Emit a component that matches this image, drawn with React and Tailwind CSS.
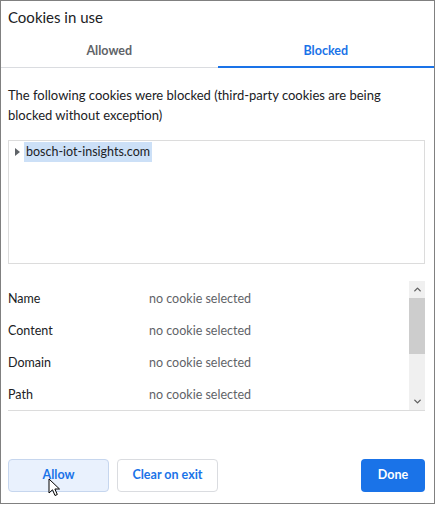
import { ChevronUp, ChevronDown } from "lucide-react";

const rows = ["Name", "Content", "Domain", "Path"];

function Cursor() {
  return (
    <svg className="absolute left-[40px] top-[19px]" width="13" height="19" viewBox="0 0 13 19">
      <path d="M1 1 L1 15 L4.5 11.8 L7 17.5 L9.3 16.5 L6.9 11 L11.5 11 Z" fill="#fff" stroke="#000" strokeWidth="1" strokeLinejoin="miter" />
    </svg>
  );
}

export default function App() {
  return (
    <div
      className="w-[435px] h-[504px] bg-white border border-[#808080] flex flex-col text-[#202124]"
      style={{ fontFamily: '"Segoe UI", Lato, "Noto Sans", sans-serif' }}
    >
      <div className="h-[35px] pl-[7px] pt-[5px] text-[15px] leading-[22px]">Cookies in use</div>

      <div className="flex h-[32px] text-[12.5px] font-bold">
        <div className="flex-1 flex items-center justify-center text-[#5f6368] border-b border-[#dadce0] pb-[1px]">
          Allowed
        </div>
        <div className="flex-1 flex items-center justify-center text-[#1a73e8] border-b-2 border-[#1a73e8]">
          Blocked
        </div>
      </div>

      <div className="pl-[7px] pr-[9px] pt-[17px] text-[13px] leading-[20px]">
        The following cookies were blocked (third-party cookies are being blocked without exception)
      </div>

      <div className="ml-[7px] mr-[9px] mt-[15px] h-[124px] border border-[#dcdcdc] pt-[1px] pl-[6px]">
        <div className="flex items-center h-[20px] text-[12.5px]">
          <svg width="5" height="8" viewBox="0 0 5 8" className="mr-[4px]">
            <path d="M0 0 L5 4 L0 8 Z" fill="#5f6368" />
          </svg>
          <span className="bg-[#cce0f7] px-[2px] leading-[20px]">bosch-iot-insights.com</span>
        </div>
      </div>

      <div className="ml-[7px] mr-[9px] mt-[17px] h-[130px] border-b border-[#dcdcdc] flex">
        <div className="flex-1 flex flex-col pt-[2px]">
          {rows.map((r) => (
            <div key={r} className="flex h-[32px] shrink-0 items-center text-[12.5px]">
              <div className="w-[141px]">{r}</div>
              <div className="text-[#5f6368]">no cookie selected</div>
            </div>
          ))}
        </div>
        <div className="w-[16px] bg-[#f0f0f0] flex flex-col">
          <div className="h-[17px] flex items-center justify-center">
            <ChevronUp size={11} strokeWidth={3} className="text-[#606060]" />
          </div>
          <div className="h-[56px] bg-[#cdcdcd]" />
          <div className="flex-1" />
          <div className="h-[17px] flex items-center justify-center">
            <ChevronDown size={11} strokeWidth={3} className="text-[#606060]" />
          </div>
        </div>
      </div>

      <div className="flex-1" />

      <div className="flex items-center pl-[7px] pr-[9px] pb-[11px] text-[12.5px] font-bold">
        <div className="relative">
          <button className="w-[101px] h-[33px] rounded-[4px] border border-[#c6d6ee] bg-[#e9f1fd] text-[#1a73e8]">
            Allow
          </button>
          <Cursor />
        </div>
        <button className="ml-[8px] w-[101px] h-[33px] rounded-[4px] border border-[#dadce0] bg-white text-[#1a73e8]">
          Clear on exit
        </button>
        <div className="flex-1" />
        <button className="w-[64px] h-[33px] rounded-[4px] bg-[#1a73e8] text-white">Done</button>
      </div>
    </div>
  );
}
